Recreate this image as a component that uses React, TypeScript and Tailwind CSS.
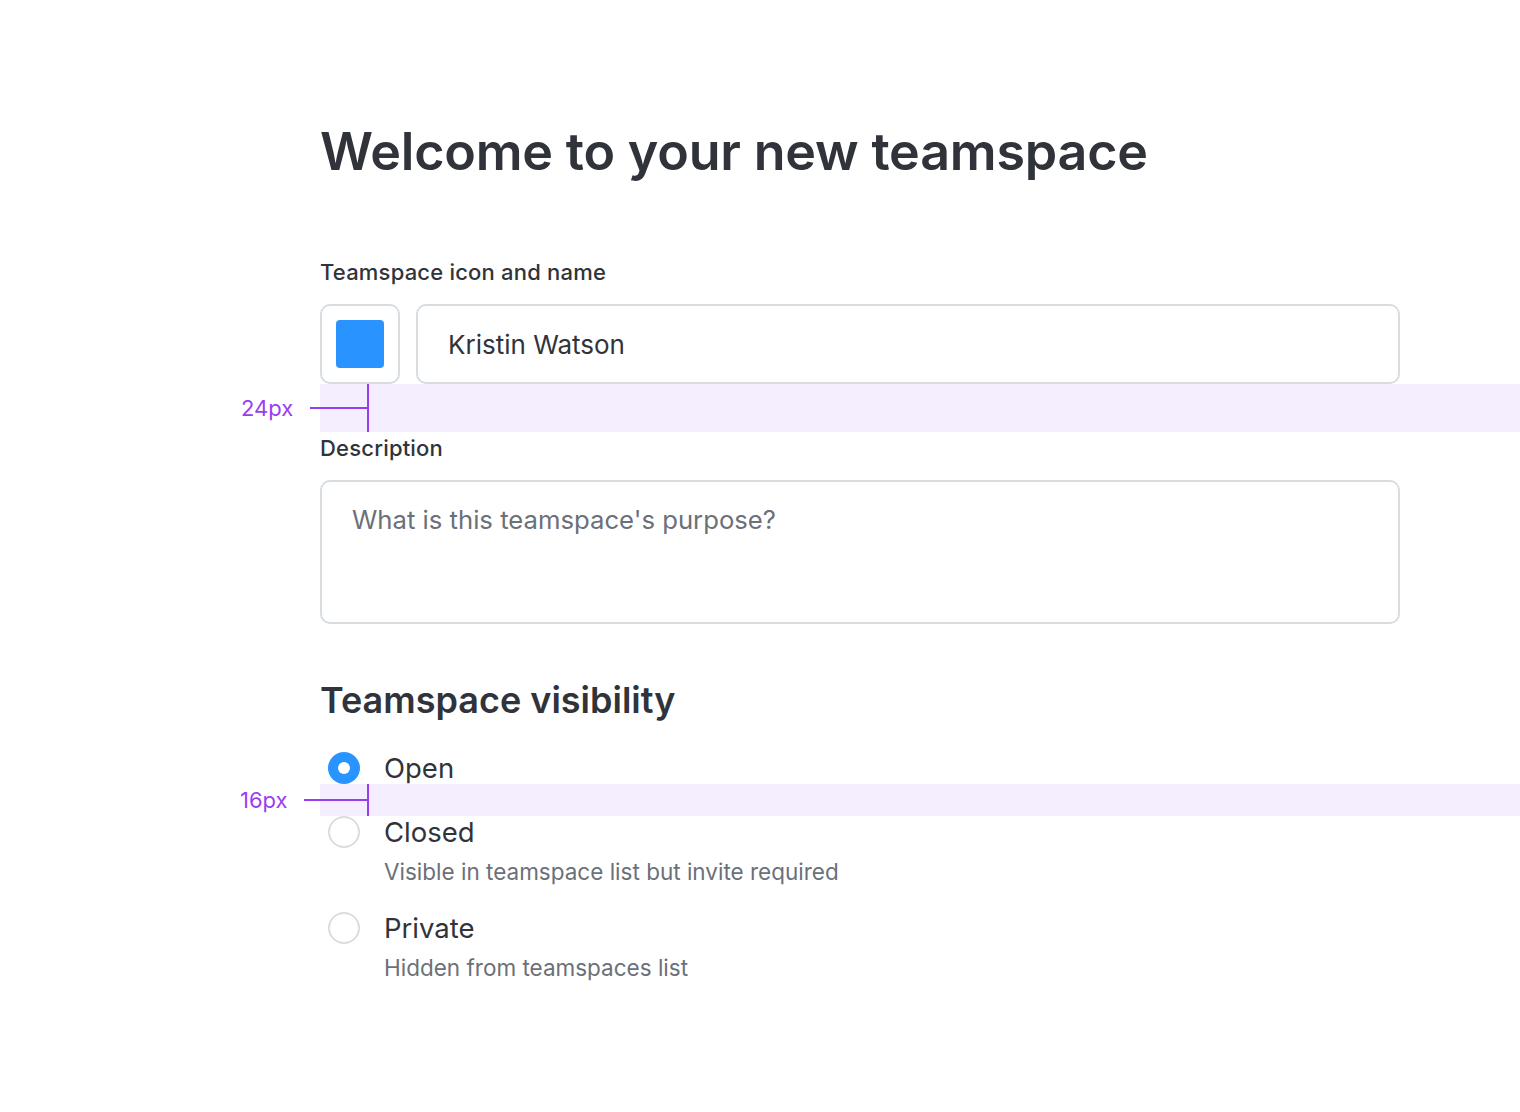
import React, { useState } from 'react';

type Visibility = 'open' | 'closed' | 'private';

const font = { fontFamily: 'Inter, "Noto Sans", sans-serif' };

// Purple spacing marker: a tinted band with a measure tick and a label on the left
const SpacingBand: React.FC<{ height: string; label: string; lineClass: string; labelClass: string }> = ({ height, label, lineClass, labelClass }) => (
  <div className={`relative ${height} bg-[#f5eefe]`}>
    <div className="absolute left-[47px] top-0 bottom-0 w-[2px] bg-[#9a3df2]" />
    <div className={`absolute top-1/2 -translate-y-1/2 h-[2px] bg-[#9a3df2] ${lineClass}`} />
    <span className={`absolute top-1/2 -translate-y-1/2 text-[22px] leading-none text-[#9a3df2] ${labelClass}`}>{label}</span>
  </div>
);

const Radio: React.FC<{ checked: boolean; onClick: () => void }> = ({ checked, onClick }) => (
  <button
    onClick={onClick}
    className={`flex-shrink-0 w-8 h-8 rounded-full flex items-center justify-center ${
      checked ? 'bg-[#2994ff]' : 'border-2 border-[#d8dde2] bg-white'
    }`}
  >
    {checked && <span className="w-3 h-3 rounded-full bg-white" />}
  </button>
);

const App: React.FC = () => {
  const [name, setName] = useState('Kristin Watson');
  const [description, setDescription] = useState('');
  const [visibility, setVisibility] = useState<Visibility>('open');

  return (
    <div className="min-h-screen bg-white pl-[320px] pt-[120px] text-[#30343a]" style={font}>
      <h1 className="text-[52px] leading-[64px] font-semibold tracking-[-0.2px]">Welcome to your new teamspace</h1>

      <label className="block mt-[72px] text-[22px] leading-[32px] font-medium tracking-[0.2px]">Teamspace icon and name</label>
      <div className="mt-4 flex gap-4 w-[1080px]">
        <button className="w-20 h-20 flex-shrink-0 rounded-[10px] border-2 border-[#d8dde2] flex items-center justify-center">
          <span className="w-12 h-12 rounded-[4px] bg-[#2994ff]" />
        </button>
        <input
          value={name}
          onChange={e => setName(e.target.value)}
          className="flex-1 h-20 rounded-[10px] border-2 border-[#d8dde2] px-[30px] text-[26px] text-[#30343a] outline-none"
        />
      </div>

      <SpacingBand height="h-12" label="24px" lineClass="left-[-10px] w-[58px]" labelClass="left-[-79px]" />

      <label className="block text-[22px] leading-[32px] font-medium tracking-[0.2px]">Description</label>
      <textarea
        value={description}
        onChange={e => setDescription(e.target.value)}
        placeholder="What is this teamspace's purpose?"
        className="mt-4 block w-[1080px] h-[144px] resize-none rounded-[10px] border-2 border-[#d8dde2] px-[30px] pt-[20px] text-[25.7px] leading-[36px] outline-none placeholder:text-[#6b7079]"
      />

      <h2 className="mt-[52px] text-[36px] leading-[48px] font-semibold">Teamspace visibility</h2>

      <div className="mt-7">
        <div className="flex items-center h-8 pl-2">
          <Radio checked={visibility === 'open'} onClick={() => setVisibility('open')} />
          <span className="ml-6 text-[27.5px] leading-8">Open</span>
        </div>

        <SpacingBand height="h-8" label="16px" lineClass="left-[-16px] w-[64px]" labelClass="left-[-80px]" />

        <div className="flex items-center h-8 pl-2">
          <Radio checked={visibility === 'closed'} onClick={() => setVisibility('closed')} />
          <span className="ml-6 text-[27.5px] leading-8">Closed</span>
        </div>
        <p className="mt-2 pl-16 text-[22.5px] leading-8 text-[#6b7079]">Visible in teamspace list but invite required</p>

        <div className="mt-6 flex items-center h-8 pl-2">
          <Radio checked={visibility === 'private'} onClick={() => setVisibility('private')} />
          <span className="ml-6 text-[27.5px] leading-8">Private</span>
        </div>
        <p className="mt-2 pl-16 text-[22.5px] leading-8 text-[#6b7079]">Hidden from teamspaces list</p>
      </div>
    </div>
  );
};

export default App;
